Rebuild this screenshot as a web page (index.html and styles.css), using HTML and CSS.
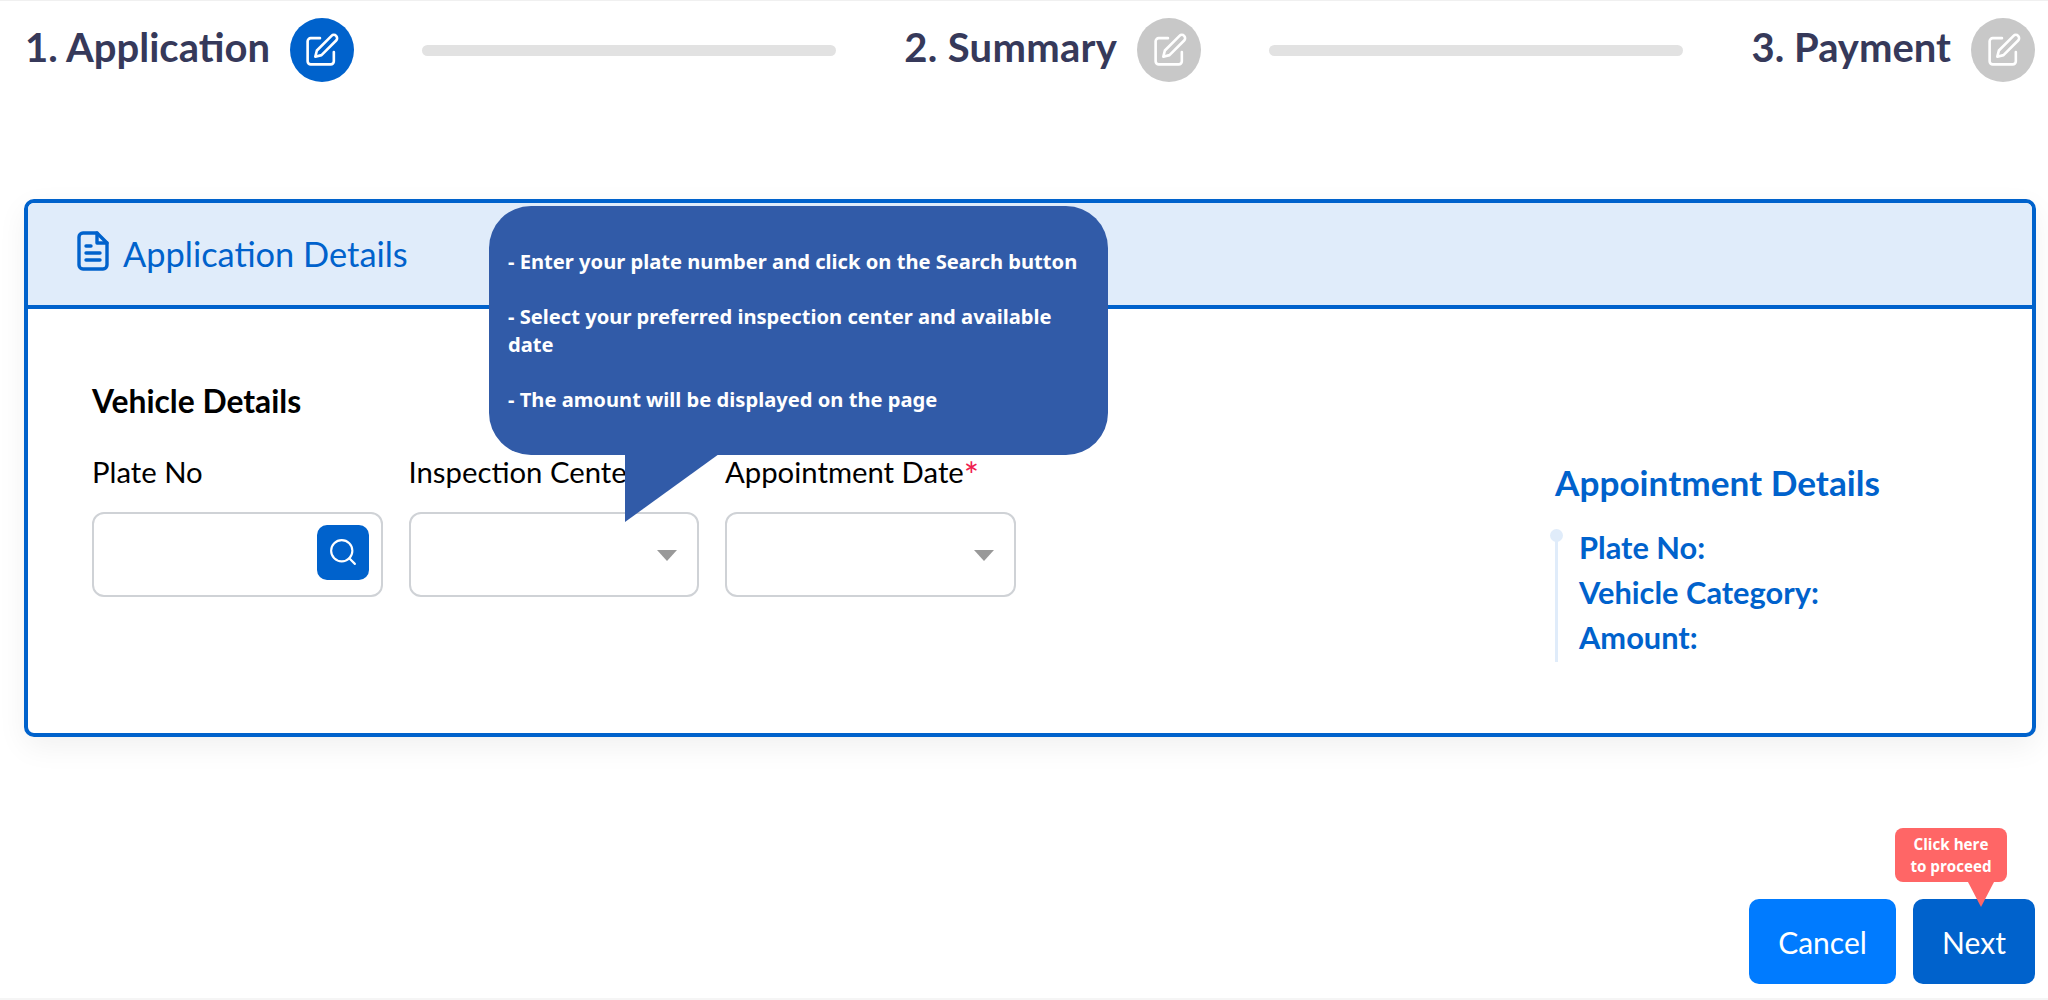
FILE: index.html
```html
<!DOCTYPE html>
<html>
<head>
  <meta name="viewport" content="width=device-width, initial-scale=1.0">
  <link rel="stylesheet" href="styles.css">
</head>
<body>
  <svg class="icon-defs" width="0" height="0">
    <symbol id="edit" viewBox="0 0 24 24" fill="none" stroke="currentColor" stroke-width="1.7" stroke-linecap="round" stroke-linejoin="round">
      <path d="M11 4H5a2 2 0 0 0-2 2v13a2 2 0 0 0 2 2h13a2 2 0 0 0 2-2v-6"/>
      <path d="M18.5 2.5a2.1 2.1 0 0 1 3 3L12 15l-4 1 1-4z"/>
    </symbol>
  </svg>

  <div class="stepper">
    <div class="step">
      <span class="step-title">1. Application</span>
      <span class="step-icon active"><svg width="37" height="37"><use href="#edit"/></svg></span>
    </div>
    <div class="step-bar"></div>
    <div class="step">
      <span class="step-title wide">2. Summary</span>
      <span class="step-icon"><svg width="37" height="37"><use href="#edit"/></svg></span>
    </div>
    <div class="step-bar"></div>
    <div class="step">
      <span class="step-title">3. Payment</span>
      <span class="step-icon"><svg width="37" height="37"><use href="#edit"/></svg></span>
    </div>
  </div>

  <div class="card">
    <div class="card-header">
      <svg class="doc-icon" viewBox="0 0 32 40" fill="none" stroke="currentColor" stroke-width="3.4" stroke-linecap="round" stroke-linejoin="round">
        <path d="M20 2H6a4 4 0 0 0-4 4v28a4 4 0 0 0 4 4h20a4 4 0 0 0 4-4V12z"/>
        <path d="M20 2v10h10"/>
        <path d="M9 15h5M9 22h14M9 29h14"/>
      </svg>
      <span>Application Details</span>
    </div>
    <div class="card-body">
      <div class="vehicle">
        <h2>Vehicle Details</h2>
        <div class="fields">
          <div class="field">
            <label>Plate No</label>
            <div class="input">
              <button class="search-btn">
                <svg width="30" height="30" viewBox="0 0 24 24" fill="none" stroke="#fff" stroke-width="1.7" stroke-linecap="round"><circle cx="11" cy="11" r="8.5"/><path d="M21.5 21.5l-4.5-4.5"/></svg>
              </button>
            </div>
          </div>
          <div class="field">
            <label>Inspection Center</label>
            <div class="input"><span class="caret"></span></div>
          </div>
          <div class="field">
            <label>Appointment Date<span class="req">*</span></label>
            <div class="input"><span class="caret"></span></div>
          </div>
        </div>
      </div>
      <div class="appointment">
        <h3>Appointment Details</h3>
        <ul>
          <li>Plate No:</li>
          <li>Vehicle Category:</li>
          <li>Amount:</li>
        </ul>
      </div>
    </div>
  </div>

  <div class="actions">
    <button class="btn cancel">Cancel</button>
    <button class="btn next">Next</button>
    <div class="hint">Click here<br>to proceed</div>
  </div>

  <div class="help">
    <p>- Enter your plate number and click on the Search button</p>
    <p>- Select your preferred inspection center and available date</p>
    <p>- The amount will be displayed on the page</p>
  </div>
</body>
</html>
```

FILE: styles.css
```css
body {
  margin: 0;
  height: 1000px;
  box-sizing: border-box;
  border-top: 1px solid #f0f0f0;
  border-bottom: 2px solid #f5f5f5;
  font-family: "Lato", sans-serif;
  color: #000;
  background: #fff;
  position: relative;
  overflow: hidden;
}

.icon-defs {
  position: absolute;
}

.stepper {
  display: flex;
  align-items: center;
  justify-content: space-between;
  height: 64px;
  margin: 17px 13px 0 25px;
}

.step {
  display: flex;
  align-items: center;
  gap: 20px;
}

.step-title {
  font-size: 40px;
  font-weight: 700;
  color: #36395a;
  margin-top: -6px;
}

.step-title.wide {
  letter-spacing: 0.3px;
}

.step-icon {
  width: 64px;
  height: 64px;
  border-radius: 50%;
  background: #c8c8c8;
  color: #fff;
  display: flex;
  align-items: center;
  justify-content: center;
}

.step-icon.active {
  background: #0062cc;
}

.step-bar {
  width: 414px;
  height: 11px;
  border-radius: 6px;
  background: #e2e2e2;
}

.card {
  margin: 117px 12px 0 24px;
  height: 538px;
  box-sizing: border-box;
  border: 4px solid #0062cc;
  border-radius: 10px;
  box-shadow: 0 10px 30px rgba(0, 0, 0, 0.06);
}

.card-header {
  height: 106px;
  box-sizing: border-box;
  border-bottom: 4px solid #0062cc;
  background: #e0ecfa;
  border-radius: 6px 6px 0 0;
  padding: 0 0 2px 48px;
  display: flex;
  align-items: center;
  gap: 13px;
  font-size: 34.4px;
  color: #0062cc;
}

.doc-icon {
  width: 34px;
  height: 40px;
  margin-top: -5px;
}

.card-body {
  display: flex;
  justify-content: space-between;
  padding: 72px 0 0 64px;
}

h2 {
  margin: 0 0 31px;
  font-size: 31.8px;
  font-weight: 700;
  line-height: 40px;
}

.fields {
  display: flex;
  gap: 26px;
}

.field label {
  display: block;
  font-size: 29.3px;
  line-height: 40px;
  margin-bottom: 20px;
}

.req {
  color: #f0204f;
  font-size: 36px;
  line-height: 0;
  vertical-align: -6px;
}

.input {
  width: 290.5px;
  height: 85px;
  box-sizing: border-box;
  border: 2px solid #cfd2d6;
  border-radius: 12px;
  display: flex;
  align-items: center;
  justify-content: flex-end;
  padding-right: 12px;
}

.search-btn {
  width: 52px;
  height: 55px;
  margin: -5px 0 0 0;
  border: 0;
  border-radius: 10px;
  padding: 0;
  background: #0062cc;
  display: flex;
  align-items: center;
  justify-content: center;
}

.caret {
  width: 0;
  height: 0;
  margin: 2px 8px 0 0;
  border-left: 10px solid transparent;
  border-right: 10px solid transparent;
  border-top: 11px solid #999;
}

.appointment {
  width: 477px;
  margin-top: 78px;
  color: #0062cc;
}

h3 {
  margin: 0 0 30px;
  font-size: 35.2px;
  font-weight: 700;
  line-height: 46px;
}

.appointment ul {
  list-style: none;
  margin: 0;
  padding: 0 0 0 21px;
  border-left: 3px solid #e0ecfa;
  position: relative;
  height: 127px;
}

.appointment ul::before {
  content: '';
  position: absolute;
  left: -8px;
  top: -6px;
  width: 13px;
  height: 13px;
  border-radius: 50%;
  background: #e0ecfa;
}

.appointment li {
  font-size: 30.8px;
  font-weight: 700;
  line-height: 45px;
  position: relative;
  top: -10px;
}

.actions {
  display: flex;
  justify-content: flex-end;
  gap: 17px;
  margin: 162px 13px 0 0;
  position: relative;
}

.btn {
  height: 85px;
  border: 0;
  border-radius: 10px;
  color: #fff;
  font-family: inherit;
  font-size: 30px;
}

.cancel {
  width: 147px;
  background: #007bff;
}

.next {
  width: 122px;
  background: #0062cc;
}

.hint {
  position: absolute;
  right: 28px;
  top: -71px;
  width: 112px;
  height: 54px;
  box-sizing: border-box;
  padding-top: 5px;
  border-radius: 8px;
  background: #ff6666;
  color: #fff;
  font-family: "Open Sans", sans-serif;
  font-size: 15.2px;
  font-weight: 700;
  line-height: 22px;
  text-align: center;
}

.hint::after {
  content: '';
  position: absolute;
  left: 73px;
  top: 54px;
  border-left: 13px solid transparent;
  border-right: 13px solid transparent;
  border-top: 25px solid #ff6666;
}

.help {
  position: absolute;
  left: 489px;
  top: 205px;
  width: 619px;
  height: 249px;
  box-sizing: border-box;
  padding: 42px 19px 0;
  border-radius: 42px;
  background: #315ba8;
  color: #fff;
  font-family: "Noto Sans", sans-serif;
  font-size: 20.15px;
  font-weight: 700;
  line-height: 27.6px;
}

.help p {
  margin: 0 0 27.6px;
}

.help::after {
  content: '';
  position: absolute;
  left: 136px;
  top: 248px;
  width: 94px;
  height: 68px;
  background: #315ba8;
  clip-path: polygon(0 0, 100% 0, 0 100%);
}
```
